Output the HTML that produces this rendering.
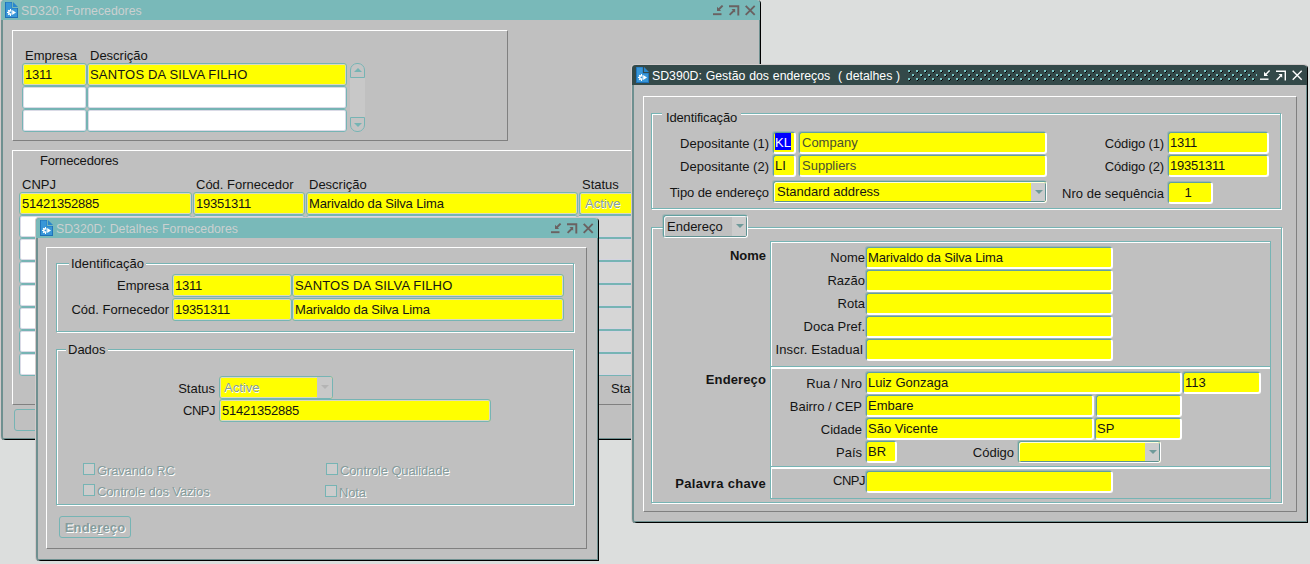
<!DOCTYPE html><html><head><meta charset="utf-8"><title>SD320</title><style>
html,body{margin:0;padding:0}
body{width:1310px;height:564px;overflow:hidden;position:relative;background:#dcdedd;font-family:"Liberation Sans",sans-serif;font-size:13px;color:#141414}
div{box-sizing:border-box}
.win{position:absolute;background:#c0c0c0;border-left:1px solid #d2caca;border-radius:4px 4px 0 4px;box-shadow:inset 2px 0 0 0 #6f9090, inset -1px -1px 0 0 #000, inset -2px -2px 0 0 #6f9090}
.tb{position:absolute;left:0;top:0;right:1px;height:20px;border-radius:4px 4px 0 0}
.tb.inact{background:#79b9b9;color:#cbd0d0}
.tb.act{background:#334949;color:#fff}
.ico{position:absolute;left:4px;top:2px}
.tt{position:absolute;left:20px;top:3px;font-size:12.3px;white-space:nowrap;line-height:16px;word-spacing:0.4px}
.act .tt{left:20px}
.ctl{position:absolute;right:3px;top:5px}
.dots{position:absolute;left:276px;top:5px}
.panel{border:1px solid;border-color:#fff #808080 #808080 #fff}
.grp{border:1px solid #76b4b4;box-shadow:inset 1px 1px 0 #fff,1px 1px 0 #fff}
.grp2{border:1px solid #76b4b4;box-shadow:inset 1px 1px 0 #fff,1px 1px 0 #fff}
.sub{border:1px solid #76b4b4;box-shadow:inset 1px 1px 0 #fff}
.sep{border-top:1px solid #76b4b4;background:#fff}
.l{position:absolute;white-space:nowrap;line-height:15px}
.l.r{text-align:right}
.l.b{font-weight:bold}
.gl{background:#c0c0c0;padding:0 2px}
.dl{color:#869c9c;text-shadow:1px 1px 0 #fff;letter-spacing:-0.15px}
.f{position:absolute;border:1px solid #76b4b4;border-radius:3px;padding:1px 0 0 2px;line-height:20px;white-space:nowrap;overflow:hidden;box-shadow:inset 0 0 0 1px rgba(212,212,226,.85)}
.f.y{background:#ffff00}
.f.w{background:#fff}
.f.n{letter-spacing:-0.23px}
.f.u{letter-spacing:0.17px}
.f.m{letter-spacing:-0.14px}
.f.g{background:#d6d6d6;border-radius:0;border-left:0;border-right:0}
.f.sq{border-radius:3px 0 0 3px;border-right:0;padding-left:5px}
.f.dis{color:#869c9c;text-shadow:1px 1px 0 #fff}
.f.a{border-style:solid;border-width:1px 2px 2px 1px;border-color:#62a0a0 #fff #fff #62a0a0;border-radius:3px;box-shadow:-1px -1px 0 0 rgba(98,160,160,.35);line-height:20px;padding:0 0 0 1px}
.f.dim{color:#4a5030;padding-left:2px}
.sel{background:#0000ff;color:#fff;display:inline-block;height:17px;line-height:20px;vertical-align:top}
.dd{position:absolute;right:0;top:0;bottom:0;width:15px;background:#c8c8c8}
.dd i{position:absolute;left:4px;top:8px;border:4px solid transparent;border-top:4px solid #6f9a9a;border-bottom:0}
.dd.disd i{border-top-color:#b4b4b4}
.f.cmb{border-width:1px;border-color:#62a0a0 #fff #fff #62a0a0;box-shadow:inset 1px 1px 0 rgba(255,255,255,.85),inset -1px -1px 0 #5f9292,-1px -1px 0 0 rgba(98,160,160,.3);line-height:20px}
.f.cmb .dd{right:1px;top:1px;bottom:1px;width:14px;background:#cccccc}
.f.cmb .dd i{left:4px;top:7px}
.f.gpop{background:#c0c0c0;line-height:19px;padding-left:3px}
.cb{border:1px solid #76b4b4;background:#cccccc}
.btn{border:1px solid #76b4b4;border-radius:3px;text-align:center;line-height:21px}
.sb{background:#c8c8c8;border-radius:7px}
.sbb{position:absolute;left:0;width:15px;height:15px;border:1px solid #76b4b4;background:#c4c4c4}
.sbb.t{top:0;border-radius:7px 7px 0 0}
.sbb.b{bottom:0;border-radius:0 0 7px 7px}
.sbb i{position:absolute;left:3px;border:4px solid transparent}
.sbb i.up{top:4px;border-bottom:4px solid #76b4b4;border-top:0}
.sbb i.dn{top:5px;border-top:4px solid #76b4b4;border-bottom:0}
</style></head><body>
<div class="win" style="left:0;top:0;width:761px;height:440px;">
<div class="tb inact"><svg class="ico" width="13" height="16" viewBox="0 0 13 16"><path d="M0 0H7.1V5.9H13V16H0Z" fill="#1e70b8"/><path d="M0.9 0.5H6.6V6.6H12.1V15.1H0.9Z" fill="#3896d8"/><path d="M8 0L13 5H8Z" fill="#2a86cc"/><clipPath id="gc"><rect x="0" y="5" width="6.5" height="11"/></clipPath><path clip-path="url(#gc)" d="M7.93 9.87L8.97 9.96L8.97 10.94L7.93 11.03L7.63 11.76L8.30 12.55L7.60 13.25L6.81 12.58L6.08 12.88L5.99 13.92L5.01 13.92L4.92 12.88L4.19 12.58L3.40 13.25L2.70 12.55L3.37 11.76L3.07 11.03L2.03 10.94L2.03 9.96L3.07 9.87L3.37 9.14L2.70 8.35L3.40 7.65L4.19 8.32L4.92 8.02L5.01 6.98L5.99 6.98L6.08 8.02L6.81 8.32L7.60 7.65L8.30 8.35L7.63 9.14Z" fill="#fff"/><circle cx="5.4" cy="10.45" r="0.9" fill="#3896d8"/><path d="M7.2 7.9V13L11 10.45Z" fill="#fff"/></svg><span class="tt">SD320: Fornecedores</span><svg class="ctl" width="44" height="12" viewBox="0 0 44 12" fill="none" stroke="#6a6161" stroke-width="1.9"><path d="M0 9.2H8.5"/><path d="M9.6 0.6L5.2 5"/><path d="M4 1.8V6H8.1Z" fill="#6a6161" stroke="none"/><path d="M16 1.2H25.3V10.6"/><path d="M16.6 9.9L21 5.5"/><path d="M18.5 4H22.2V7.8Z" fill="#6a6161" stroke="none"/><path d="M32.7 0.8L41.7 9.8M41.7 0.8L32.7 9.8"/></svg></div>
</div>
<div class="panel" style="position:absolute;left:12px;top:30px;width:496px;height:111px;"></div>
<div class="l " style="left:25px;top:48px;">Empresa</div>
<div class="l " style="left:90px;top:48px;">Descrição</div>
<div class="f y n" style="left:22px;top:63px;width:65px;height:23px;">1311</div>
<div class="f y u" style="left:87px;top:63px;width:260px;height:23px;">SANTOS DA SILVA FILHO</div>
<div class="f w" style="left:22px;top:86px;width:65px;height:23px;"></div>
<div class="f w" style="left:87px;top:86px;width:260px;height:23px;"></div>
<div class="f w" style="left:22px;top:109px;width:65px;height:23px;"></div>
<div class="f w" style="left:87px;top:109px;width:260px;height:23px;"></div>
<div class="sb" style="position:absolute;left:350px;top:63px;width:15px;height:69px;"><div class="sbb t"><i class="up"></i></div><div class="sbb b"><i class="dn"></i></div></div>
<div class="panel" style="position:absolute;left:12px;top:150px;width:740px;height:255px;"></div>
<div class="l " style="left:40px;top:153px;letter-spacing:-0.15px">Fornecedores</div>
<div class="l " style="left:22px;top:177px;">CNPJ</div>
<div class="l " style="left:196px;top:177px;">Cód. Fornecedor</div>
<div class="l " style="left:309px;top:177px;">Descrição</div>
<div class="l " style="left:582px;top:177px;">Status</div>
<div class="f y n" style="left:19px;top:192px;width:173px;height:23px;">51421352885</div>
<div class="f y n" style="left:193px;top:192px;width:112px;height:23px;">19351311</div>
<div class="f y m" style="left:306px;top:192px;width:272px;height:23px;">Marivaldo da Silva Lima</div>
<div class="f y dis sq" style="left:579px;top:192px;width:59px;height:23px;">Active</div>
<div class="f w n" style="left:19px;top:215px;width:173px;height:23px;"></div>
<div class="f w n" style="left:193px;top:215px;width:112px;height:23px;"></div>
<div class="f w m" style="left:306px;top:215px;width:272px;height:23px;"></div>
<div class="f g" style="left:579px;top:215px;width:59px;height:23px;"></div>
<div class="f w n" style="left:19px;top:238px;width:173px;height:23px;"></div>
<div class="f w n" style="left:193px;top:238px;width:112px;height:23px;"></div>
<div class="f w m" style="left:306px;top:238px;width:272px;height:23px;"></div>
<div class="f g" style="left:579px;top:238px;width:59px;height:23px;"></div>
<div class="f w n" style="left:19px;top:261px;width:173px;height:23px;"></div>
<div class="f w n" style="left:193px;top:261px;width:112px;height:23px;"></div>
<div class="f w m" style="left:306px;top:261px;width:272px;height:23px;"></div>
<div class="f g" style="left:579px;top:261px;width:59px;height:23px;"></div>
<div class="f w n" style="left:19px;top:284px;width:173px;height:23px;"></div>
<div class="f w n" style="left:193px;top:284px;width:112px;height:23px;"></div>
<div class="f w m" style="left:306px;top:284px;width:272px;height:23px;"></div>
<div class="f g" style="left:579px;top:284px;width:59px;height:23px;"></div>
<div class="f w n" style="left:19px;top:307px;width:173px;height:23px;"></div>
<div class="f w n" style="left:193px;top:307px;width:112px;height:23px;"></div>
<div class="f w m" style="left:306px;top:307px;width:272px;height:23px;"></div>
<div class="f g" style="left:579px;top:307px;width:59px;height:23px;"></div>
<div class="f w n" style="left:19px;top:330px;width:173px;height:23px;"></div>
<div class="f w n" style="left:193px;top:330px;width:112px;height:23px;"></div>
<div class="f w m" style="left:306px;top:330px;width:272px;height:23px;"></div>
<div class="f g" style="left:579px;top:330px;width:59px;height:23px;"></div>
<div class="f w n" style="left:19px;top:353px;width:173px;height:23px;"></div>
<div class="f w n" style="left:193px;top:353px;width:112px;height:23px;"></div>
<div class="f w m" style="left:306px;top:353px;width:272px;height:23px;"></div>
<div class="f g" style="left:579px;top:353px;width:59px;height:23px;"></div>
<div class="l " style="left:611px;top:381px;">Status</div>
<div class="btn" style="position:absolute;left:14px;top:409px;width:60px;height:22px;"></div>
<div class="win" style="left:35px;top:217px;width:564px;height:344px;border-top:1px solid #d2caca">
<div class="tb inact"><svg class="ico" width="13" height="16" viewBox="0 0 13 16"><path d="M0 0H7.1V5.9H13V16H0Z" fill="#1e70b8"/><path d="M0.9 0.5H6.6V6.6H12.1V15.1H0.9Z" fill="#3896d8"/><path d="M8 0L13 5H8Z" fill="#2a86cc"/><clipPath id="gc"><rect x="0" y="5" width="6.5" height="11"/></clipPath><path clip-path="url(#gc)" d="M7.93 9.87L8.97 9.96L8.97 10.94L7.93 11.03L7.63 11.76L8.30 12.55L7.60 13.25L6.81 12.58L6.08 12.88L5.99 13.92L5.01 13.92L4.92 12.88L4.19 12.58L3.40 13.25L2.70 12.55L3.37 11.76L3.07 11.03L2.03 10.94L2.03 9.96L3.07 9.87L3.37 9.14L2.70 8.35L3.40 7.65L4.19 8.32L4.92 8.02L5.01 6.98L5.99 6.98L6.08 8.02L6.81 8.32L7.60 7.65L8.30 8.35L7.63 9.14Z" fill="#fff"/><circle cx="5.4" cy="10.45" r="0.9" fill="#3896d8"/><path d="M7.2 7.9V13L11 10.45Z" fill="#fff"/></svg><span class="tt">SD320D: Detalhes Fornecedores</span><svg class="ctl" width="44" height="12" viewBox="0 0 44 12" fill="none" stroke="#6a6161" stroke-width="1.9"><path d="M0 9.2H8.5"/><path d="M9.6 0.6L5.2 5"/><path d="M4 1.8V6H8.1Z" fill="#6a6161" stroke="none"/><path d="M16 1.2H25.3V10.6"/><path d="M16.6 9.9L21 5.5"/><path d="M18.5 4H22.2V7.8Z" fill="#6a6161" stroke="none"/><path d="M32.7 0.8L41.7 9.8M41.7 0.8L32.7 9.8"/></svg></div>
</div>
<div class="panel" style="position:absolute;left:46px;top:247px;width:541px;height:302px;"></div>
<div class="grp" style="position:absolute;left:56px;top:263px;width:518px;height:69px;"></div>
<div class="l gl" style="left:69px;top:256px;">Identificação</div>
<div class="l r " style="left:-131px;width:300px;top:278px;">Empresa</div>
<div class="l r " style="left:-131px;width:300px;top:302px;">Cód. Fornecedor</div>
<div class="f y n" style="left:172px;top:274px;width:120px;height:23px;">1311</div>
<div class="f y u" style="left:292px;top:274px;width:272px;height:23px;">SANTOS DA SILVA FILHO</div>
<div class="f y n" style="left:172px;top:298px;width:120px;height:23px;">19351311</div>
<div class="f y m" style="left:292px;top:298px;width:272px;height:23px;">Marivaldo da Silva Lima</div>
<div class="grp" style="position:absolute;left:56px;top:349px;width:518px;height:156px;"></div>
<div class="l gl" style="left:66px;top:342px;">Dados</div>
<div class="l r " style="left:-85px;width:300px;top:381px;">Status</div>
<div class="l r " style="left:-85px;width:300px;top:403px;letter-spacing:-0.5px">CNPJ</div>
<div class="f y dis" style="left:219px;top:376px;width:114px;height:23px;padding-left:4px">Active<span class="dd disd"><i></i></span></div>
<div class="f y n" style="left:219px;top:399px;width:272px;height:23px;">51421352885</div>
<div class="cb" style="position:absolute;left:83px;top:463px;width:12px;height:12px;"></div>
<div class="l dl" style="left:97px;top:463px;">Gravando RC</div>
<div class="cb" style="position:absolute;left:83px;top:484px;width:12px;height:12px;"></div>
<div class="l dl" style="left:97px;top:484px;">Controle dos Vazios</div>
<div class="cb" style="position:absolute;left:326px;top:463px;width:12px;height:12px;"></div>
<div class="l dl" style="left:340px;top:463px;">Controle Qualidade</div>
<div class="cb" style="position:absolute;left:325px;top:485px;width:12px;height:12px;"></div>
<div class="l dl" style="left:339px;top:485px;">Nota</div>
<div class="btn" style="position:absolute;left:59px;top:516px;width:72px;height:22px;"><span class="dl" style="font-weight:bold;letter-spacing:0.15px">Ende<u>r</u>eço</span></div>
<div class="win" style="left:631px;top:64px;width:677px;height:459px;border-top:1px solid #d0caca">
<div class="tb act"><svg class="ico" width="13" height="16" viewBox="0 0 13 16"><path d="M0 0H7.1V5.9H13V16H0Z" fill="#1e70b8"/><path d="M0.9 0.5H6.6V6.6H12.1V15.1H0.9Z" fill="#3896d8"/><path d="M8 0L13 5H8Z" fill="#2a86cc"/><clipPath id="gc"><rect x="0" y="5" width="6.5" height="11"/></clipPath><path clip-path="url(#gc)" d="M7.93 9.87L8.97 9.96L8.97 10.94L7.93 11.03L7.63 11.76L8.30 12.55L7.60 13.25L6.81 12.58L6.08 12.88L5.99 13.92L5.01 13.92L4.92 12.88L4.19 12.58L3.40 13.25L2.70 12.55L3.37 11.76L3.07 11.03L2.03 10.94L2.03 9.96L3.07 9.87L3.37 9.14L2.70 8.35L3.40 7.65L4.19 8.32L4.92 8.02L5.01 6.98L5.99 6.98L6.08 8.02L6.81 8.32L7.60 7.65L8.30 8.35L7.63 9.14Z" fill="#fff"/><circle cx="5.4" cy="10.45" r="0.9" fill="#3896d8"/><path d="M7.2 7.9V13L11 10.45Z" fill="#fff"/></svg><span class="tt">SD390D: Gestão dos endereços&nbsp; ( detalhes )</span><svg class="dots" width="349" height="11"><defs><pattern id="dp" width="8" height="8" patternUnits="userSpaceOnUse"><path d="M0 0h2v2h-2z M4 4h2v2h-2z" fill="#78c4c4"/><path d="M2 1h1v1h-1z M1 2h1v1h-1z M6 5h1v1h-1z M5 6h1v1h-1z" fill="#000"/></pattern></defs><rect width="349" height="11" fill="url(#dp)"/></svg><svg class="ctl" width="44" height="12" viewBox="0 0 44 12" fill="none" stroke="#ffffff" stroke-width="1.4"><path d="M0 9.2H8.5"/><path d="M9.6 0.6L5.2 5"/><path d="M4 1.8V6H8.1Z" fill="#ffffff" stroke="none"/><path d="M16 1.2H25.3V10.6"/><path d="M16.6 9.9L21 5.5"/><path d="M18.5 4H22.2V7.8Z" fill="#ffffff" stroke="none"/><path d="M32.7 0.8L41.7 9.8M41.7 0.8L32.7 9.8"/></svg></div>
</div>
<div class="panel" style="position:absolute;left:643px;top:96px;width:654px;height:416px;"></div>
<div class="grp2" style="position:absolute;left:651px;top:113px;width:630px;height:96px;"></div>
<div class="l gl" style="left:662px;top:110px;padding:0 4px;letter-spacing:-0.15px">Identificação</div>
<div class="l r " style="left:469px;width:300px;top:136px;">Depositante (1)</div>
<div class="l r " style="left:469px;width:300px;top:159px;">Depositante (2)</div>
<div class="l r " style="left:469px;width:300px;top:185px;letter-spacing:-0.09px">Tipo de endereço</div>
<div class="f y a" style="left:773px;top:132px;width:23px;height:22px;"><span class="sel">KL</span></div>
<div class="f y a dim" style="left:799px;top:132px;width:248px;height:22px;">Company</div>
<div class="f y a" style="left:773px;top:155px;width:23px;height:22px;">LI</div>
<div class="f y a dim" style="left:799px;top:155px;width:248px;height:22px;">Suppliers</div>
<div class="f y a cmb" style="left:773px;top:181px;width:274px;height:22px;padding-left:3px">Standard address<span class="dd"><i></i></span></div>
<div class="l r " style="left:864px;width:300px;top:136px;letter-spacing:-0.15px">Código (1)</div>
<div class="l r " style="left:864px;width:300px;top:159px;letter-spacing:-0.15px">Código (2)</div>
<div class="l r " style="left:864px;width:300px;top:186px;">Nro de sequência</div>
<div class="f y a n" style="left:1168px;top:132px;width:101px;height:22px;">1311</div>
<div class="f y a n" style="left:1168px;top:155px;width:101px;height:22px;">19351311</div>
<div class="f y a" style="left:1168px;top:182px;width:45px;height:22px;text-align:center;padding-right:5px">1</div>
<div class="grp2" style="position:absolute;left:651px;top:227px;width:631px;height:276px;"></div>
<div class="f gpop cmb" style="left:663px;top:215px;width:85px;height:23px;">Endereço<span class="dd g"><i></i></span></div>
<div class="sub" style="position:absolute;left:770px;top:241px;width:501px;height:258px;"></div>
<div class="sep" style="position:absolute;left:771px;top:366px;width:499px;height:3px;"></div>
<div class="sep" style="position:absolute;left:771px;top:466px;width:499px;height:3px;"></div>
<div class="l r b" style="left:466px;width:300px;top:248px;">Nome</div>
<div class="l r b" style="left:466px;width:300px;top:372px;letter-spacing:0.12px">Endereço</div>
<div class="l r b" style="left:466px;width:300px;top:476px;letter-spacing:0.3px">Palavra chave</div>
<div class="l r " style="left:565px;width:300px;top:250px;">Nome</div>
<div class="f y a m" style="left:866px;top:247px;width:247px;height:22px;">Marivaldo da Silva Lima</div>
<div class="l r " style="left:565px;width:300px;top:273px;">Razão</div>
<div class="f y a m" style="left:866px;top:270px;width:247px;height:22px;"></div>
<div class="l r " style="left:565px;width:300px;top:296px;">Rota</div>
<div class="f y a m" style="left:866px;top:293px;width:247px;height:22px;"></div>
<div class="l r " style="left:565px;width:300px;top:319px;">Doca Pref.</div>
<div class="f y a m" style="left:866px;top:316px;width:247px;height:22px;"></div>
<div class="l r " style="left:563px;width:300px;top:342px;letter-spacing:0.15px">Inscr. Estadual</div>
<div class="f y a m" style="left:866px;top:339px;width:247px;height:22px;"></div>
<div class="l r " style="left:562px;width:300px;top:376px;">Rua / Nro</div>
<div class="f y a" style="left:866px;top:372px;width:316px;height:22px;">Luiz Gonzaga</div>
<div class="f y a" style="left:1183px;top:372px;width:78px;height:22px;">113</div>
<div class="l r " style="left:562px;width:300px;top:399px;">Bairro / CEP</div>
<div class="f y a" style="left:866px;top:395px;width:228px;height:22px;">Embare</div>
<div class="f y a" style="left:1096px;top:395px;width:86px;height:22px;"></div>
<div class="l r " style="left:562px;width:300px;top:422px;">Cidade</div>
<div class="f y a" style="left:866px;top:418px;width:228px;height:22px;">São Vicente</div>
<div class="f y a" style="left:1095px;top:418px;width:87px;height:22px;">SP</div>
<div class="l r " style="left:562px;width:300px;top:445px;">País</div>
<div class="f y a" style="left:866px;top:441px;width:31px;height:22px;">BR</div>
<div class="l r " style="left:714px;width:300px;top:445px;">Código</div>
<div class="f y a cmb" style="left:1018px;top:441px;width:143px;height:22px;"><span class="dd"><i></i></span></div>
<div class="l r " style="left:565px;width:300px;top:473px;letter-spacing:-0.5px">CNPJ</div>
<div class="f y a" style="left:866px;top:471px;width:247px;height:22px;"></div>
</body></html>
